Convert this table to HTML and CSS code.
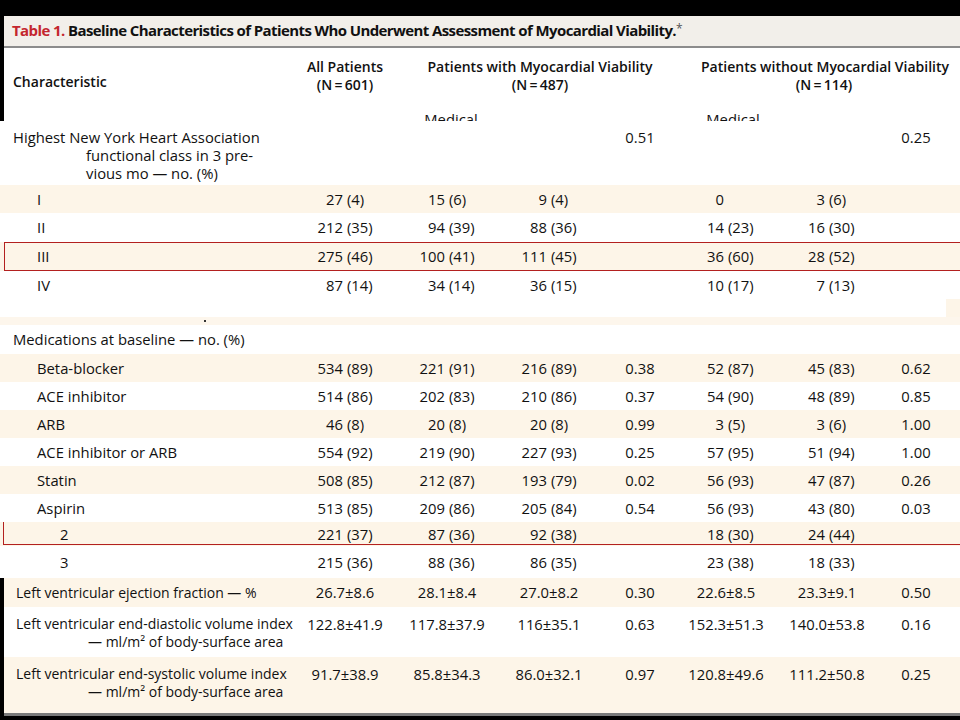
FILE: index.html
```html
<!DOCTYPE html>
<html lang="en">
<head>
<meta charset="utf-8">
<title>Table 1</title>
<link rel="stylesheet" href="styles.css">
</head>
<body>
<div class="page">
  <section class="top">
    <div class="title-bar"><span class="tnum">Table 1.</span> Baseline Characteristics of Patients Who Underwent Assessment of Myocardial Viability.<span class="star">*</span></div>
    <div class="grid head">
      <div class="h-char">Characteristic</div>
      <div class="h-all">All Patients<br>(N&thinsp;=&thinsp;601)</div>
      <div class="h-with">Patients with Myocardial Viability<br>(N&thinsp;=&thinsp;487)</div>
      <div class="h-without">Patients without Myocardial Viability<br>(N&thinsp;=&thinsp;114)</div>
    </div>
    <div class="grid sub">
      <div class="sub-a">Medical</div>
      <div class="sub-b">Medical</div>
    </div>
  </section>

  <section class="mid">
    <div class="grid row tall">
      <div class="lab hang">Highest New York Heart Association<br>functional class in 3 pre-<br>vious mo — no. (%)</div>
      <div></div><div></div><div></div>
      <div class="c">0.51</div>
      <div></div><div></div>
      <div class="c">0.25</div>
    </div>
    <div class="grid row beige">
      <div class="lab i1">I</div>
      <div class="v"><span>27</span><span>(4)</span></div>
      <div class="v"><span>15</span><span>(6)</span></div>
      <div class="v"><span>9</span><span>(4)</span></div>
      <div></div>
      <div class="v"><span>0</span><span></span></div>
      <div class="v"><span>3</span><span>(6)</span></div>
      <div></div>
    </div>
    <div class="grid row h29">
      <div class="lab i1">II</div>
      <div class="v"><span>212</span><span>(35)</span></div>
      <div class="v"><span>94</span><span>(39)</span></div>
      <div class="v"><span>88</span><span>(36)</span></div>
      <div></div>
      <div class="v"><span>14</span><span>(23)</span></div>
      <div class="v"><span>16</span><span>(30)</span></div>
      <div></div>
    </div>
    <div class="grid row h29 beige redbox">
      <div class="lab i1">III</div>
      <div class="v"><span>275</span><span>(46)</span></div>
      <div class="v"><span>100</span><span>(41)</span></div>
      <div class="v"><span>111</span><span>(45)</span></div>
      <div></div>
      <div class="v"><span>36</span><span>(60)</span></div>
      <div class="v"><span>28</span><span>(52)</span></div>
      <div></div>
    </div>
    <div class="grid row">
      <div class="lab i1">IV</div>
      <div class="v"><span>87</span><span>(14)</span></div>
      <div class="v"><span>34</span><span>(14)</span></div>
      <div class="v"><span>36</span><span>(15)</span></div>
      <div></div>
      <div class="v"><span>10</span><span>(17)</span></div>
      <div class="v"><span>7</span><span>(13)</span></div>
      <div></div>
    </div>
    <div class="gap">
      <div class="gap-top"><div class="gap-white"></div><div class="gap-edge"></div></div>
      <div class="gap-band"><span class="dot"></span></div>
    </div>
    <div class="grid row h29">
      <div class="lab">Medications at baseline — no. (%)</div>
    </div>
    <div class="grid row beige">
      <div class="lab i1">Beta-blocker</div>
      <div class="v"><span>534</span><span>(89)</span></div>
      <div class="v"><span>221</span><span>(91)</span></div>
      <div class="v"><span>216</span><span>(89)</span></div>
      <div class="c">0.38</div>
      <div class="v"><span>52</span><span>(87)</span></div>
      <div class="v"><span>45</span><span>(83)</span></div>
      <div class="c">0.62</div>
    </div>
    <div class="grid row">
      <div class="lab i1">ACE inhibitor</div>
      <div class="v"><span>514</span><span>(86)</span></div>
      <div class="v"><span>202</span><span>(83)</span></div>
      <div class="v"><span>210</span><span>(86)</span></div>
      <div class="c">0.37</div>
      <div class="v"><span>54</span><span>(90)</span></div>
      <div class="v"><span>48</span><span>(89)</span></div>
      <div class="c">0.85</div>
    </div>
    <div class="grid row beige">
      <div class="lab i1">ARB</div>
      <div class="v"><span>46</span><span>(8)</span></div>
      <div class="v"><span>20</span><span>(8)</span></div>
      <div class="v"><span>20</span><span>(8)</span></div>
      <div class="c">0.99</div>
      <div class="v"><span>3</span><span>(5)</span></div>
      <div class="v"><span>3</span><span>(6)</span></div>
      <div class="c">1.00</div>
    </div>
    <div class="grid row">
      <div class="lab i1">ACE inhibitor or ARB</div>
      <div class="v"><span>554</span><span>(92)</span></div>
      <div class="v"><span>219</span><span>(90)</span></div>
      <div class="v"><span>227</span><span>(93)</span></div>
      <div class="c">0.25</div>
      <div class="v"><span>57</span><span>(95)</span></div>
      <div class="v"><span>51</span><span>(94)</span></div>
      <div class="c">1.00</div>
    </div>
    <div class="grid row beige">
      <div class="lab i1">Statin</div>
      <div class="v"><span>508</span><span>(85)</span></div>
      <div class="v"><span>212</span><span>(87)</span></div>
      <div class="v"><span>193</span><span>(79)</span></div>
      <div class="c">0.02</div>
      <div class="v"><span>56</span><span>(93)</span></div>
      <div class="v"><span>47</span><span>(87)</span></div>
      <div class="c">0.26</div>
    </div>
    <div class="grid row">
      <div class="lab i1">Aspirin</div>
      <div class="v"><span>513</span><span>(85)</span></div>
      <div class="v"><span>209</span><span>(86)</span></div>
      <div class="v"><span>205</span><span>(84)</span></div>
      <div class="c">0.54</div>
      <div class="v"><span>56</span><span>(93)</span></div>
      <div class="v"><span>43</span><span>(80)</span></div>
      <div class="c">0.03</div>
    </div>
    <div class="grid row h24 beige redline">
      <div class="lab i2">2</div>
      <div class="v"><span>221</span><span>(37)</span></div>
      <div class="v"><span>87</span><span>(36)</span></div>
      <div class="v"><span>92</span><span>(38)</span></div>
      <div></div>
      <div class="v"><span>18</span><span>(30)</span></div>
      <div class="v"><span>24</span><span>(44)</span></div>
      <div></div>
    </div>
    <div class="grid row h32">
      <div class="lab i2">3</div>
      <div class="v"><span>215</span><span>(36)</span></div>
      <div class="v"><span>88</span><span>(36)</span></div>
      <div class="v"><span>86</span><span>(35)</span></div>
      <div></div>
      <div class="v"><span>23</span><span>(38)</span></div>
      <div class="v"><span>18</span><span>(33)</span></div>
      <div></div>
    </div>
  </section>

  <section class="bottom">
    <div class="grid row h29 beige">
      <div class="lab">Left ventricular ejection fraction — %</div>
      <div class="c">26.7±8.6</div>
      <div class="c">28.1±8.4</div>
      <div class="c">27.0±8.2</div>
      <div class="c">0.30</div>
      <div class="c">22.6±8.5</div>
      <div class="c">23.3±9.1</div>
      <div class="c">0.50</div>
    </div>
    <div class="grid row two dias">
      <div class="lab hang2">Left ventricular end-diastolic volume index<br>— ml/m² of body-surface area</div>
      <div class="c">122.8±41.9</div>
      <div class="c">117.8±37.9</div>
      <div class="c">116±35.1</div>
      <div class="c">0.63</div>
      <div class="c">152.3±51.3</div>
      <div class="c">140.0±53.8</div>
      <div class="c">0.16</div>
    </div>
    <div class="grid row two sys beige">
      <div class="lab hang2">Left ventricular end-systolic volume index<br>— ml/m² of body-surface area</div>
      <div class="c">91.7±38.9</div>
      <div class="c">85.8±34.3</div>
      <div class="c">86.0±32.1</div>
      <div class="c">0.97</div>
      <div class="c">120.8±49.6</div>
      <div class="c">111.2±50.8</div>
      <div class="c">0.25</div>
    </div>
  </section>
</div>
</body>
</html>
```

FILE: styles.css
```css
* { box-sizing: border-box; }

body {
  margin: 0;
  background: #000;
  font-family: "Open Sans", "Noto Sans", sans-serif;
  font-size: 14.8px;
  color: #111;
}

.page {
  width: 960px;
  height: 720px;
  overflow: hidden;
  padding-top: 16px;
}

/* ---------- top piece ---------- */
.top {
  margin-left: 4px;
  background: #fff;
}

.title-bar {
  height: 32px;
  background: #f2efea;
  border-bottom: 2px solid #8c8c8c;
  padding-left: 8px;
  font-size: 15px;
  font-weight: 700;
  letter-spacing: -0.6px;
  line-height: 25px;
  white-space: nowrap;
  color: #111;
}

.tnum { color: #c4262e; }

.star {
  font-weight: 400;
  font-size: 12px;
  vertical-align: 3px;
  color: #555;
}

.grid {
  display: grid;
  grid-template-columns: 293px 96px 108px 96px 86px 86px 116px 62px 1fr;
}

.mid .grid {
  grid-template-columns: 297px 96px 108px 96px 86px 86px 116px 62px 1fr;
}

.head {
  height: 56px;
  font-size: 14px;
  font-weight: 600;
  line-height: 18px;
  color: #111;
}

.h-char {
  grid-column: 1;
  padding-left: 9px;
  padding-top: 25px;
}

.h-all {
  grid-column: 2;
  text-align: center;
  padding-top: 10px;
  white-space: nowrap;
}

.h-with {
  grid-column: 3 / 6;
  text-align: center;
  padding-top: 10px;
  padding-left: 4px;
  white-space: nowrap;
}

.h-without {
  grid-column: 6 / 9;
  text-align: center;
  padding-top: 10px;
  padding-left: 18px;
  white-space: nowrap;
}

.sub {
  height: 17px;
  overflow: hidden;
  line-height: 18px;
  padding-top: 6px;
}

.sub-a {
  grid-column: 3;
  text-align: center;
  padding-left: 8px;
}

.sub-b {
  grid-column: 6;
  text-align: center;
  padding-left: 14px;
}

/* ---------- rows ---------- */
.mid { background: #fff; }

.row {
  height: 28px;
  line-height: 28px;
  position: relative;
  white-space: nowrap;
}

.h29 { height: 29px; line-height: 29px; }
.h24 { height: 24px; line-height: 24px; }
.h32 { height: 32px; line-height: 32px; }

.beige { background: #fdf5e8; }

.lab { padding-left: 13px; }
.i1 { padding-left: 37px; }
.i2 { padding-left: 60px; }

.hang {
  padding-left: 86px;
  text-indent: -73px;
}

.tall {
  height: 64px;
  line-height: 18px;
  padding-top: 7px;
}

.c { text-align: center; }

.v {
  display: grid;
  grid-template-columns: 1fr 1fr;
  column-gap: 4px;
}

.v span:first-child { text-align: right; }
.v span:last-child { text-align: left; }

.redbox::after {
  content: "";
  position: absolute;
  left: 4px;
  right: 0;
  top: 0;
  bottom: 0;
  border: 1px solid #b3201f;
  border-right: 0;
  pointer-events: none;
}

.redline::after {
  content: "";
  position: absolute;
  left: 3px;
  right: 0;
  top: 0;
  bottom: 1px;
  border-left: 1px solid #b3201f;
  border-bottom: 1px solid #b3201f;
  pointer-events: none;
}

/* ---------- collage gap ---------- */
.gap { height: 26px; }

.gap-top {
  display: flex;
  height: 18px;
}

.gap-white { flex: 1; background: #fff; }
.gap-edge { width: 14px; background: #fdf5e8; }

.gap-band {
  height: 8px;
  background: #fdf6ec;
  display: flex;
  align-items: center;
  padding-left: 204px;
}

.dot {
  width: 2px;
  height: 2px;
  background: #333;
}

/* ---------- bottom piece ---------- */
.bottom {
  margin-left: 4px;
  background: #fff;
  border-bottom: 3px solid #7a7a7a;
}

.bottom .lab {
  padding-left: 12px;
  font-size: 14px;
}

.two {
  line-height: 18px;
  padding-top: 8px;
}

.dias { height: 50px; }
.sys { height: 56px; }

.bottom .hang2 {
  padding-left: 84px;
  text-indent: -72px;
}
```
